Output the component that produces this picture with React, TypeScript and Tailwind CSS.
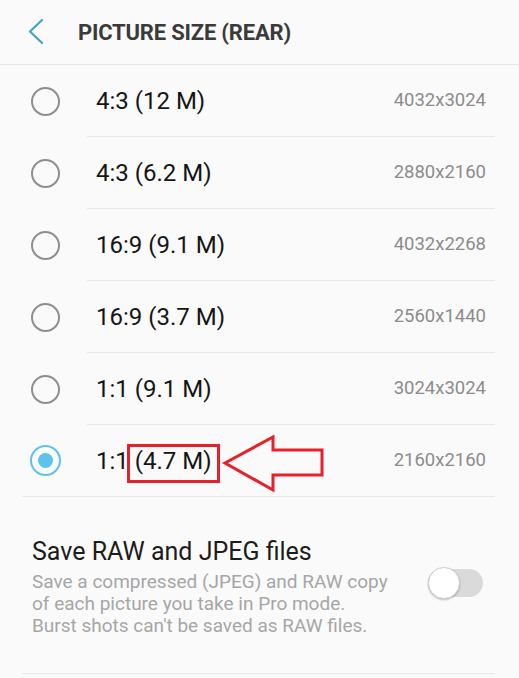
import React from 'react';

interface SizeOption {
  label: string;
  resolution: string;
  selected?: boolean;
}

const options: SizeOption[] = [
  { label: '4:3 (12 M)', resolution: '4032x3024' },
  { label: '4:3 (6.2 M)', resolution: '2880x2160' },
  { label: '16:9 (9.1 M)', resolution: '4032x2268' },
  { label: '16:9 (3.7 M)', resolution: '2560x1440' },
  { label: '1:1 (9.1 M)', resolution: '3024x3024' },
  { label: '1:1 (4.7 M)', resolution: '2160x2160', selected: true },
];

function Radio({ selected }: { selected?: boolean }) {
  if (selected) {
    return (
      <div className="w-[31px] h-[31px] rounded-full border-[2.5px] border-[#5bc4e8] flex items-center justify-center">
        <div className="w-[15px] h-[15px] rounded-full bg-[#5bc4e8]" />
      </div>
    );
  }
  return <div className="w-[29px] h-[29px] rounded-full border-2 border-[#8e8e8e]" />;
}

function OptionRow({ option, last }: { option: SizeOption; last: boolean }) {
  return (
    <div
      className={`flex h-[72px] mr-[24px] ${last ? 'ml-[22px] border-b border-[#e8e8e8]' : ''}`}
    >
      <div
        className={`flex items-center justify-center ${last ? 'w-[47px]' : 'w-[87px] pl-[3px]'}`}
      >
        <Radio selected={option.selected} />
      </div>
      <div
        className={`flex-1 flex items-center justify-between pr-[9px] ${last ? 'pl-[27px]' : 'pl-[9px] border-b border-[#e8e8e8]'}`}
      >
        <span className="text-[24px] text-[#151515]">{option.label}</span>
        <span className="text-[18.5px] text-[#8c8c8c]">{option.resolution}</span>
      </div>
    </div>
  );
}

export default function App() {
  return (
    <div
      className="relative w-[519px] h-[678px] overflow-hidden bg-[#fafafa]"
      style={{ fontFamily: 'Roboto, "Noto Sans", sans-serif' }}
    >
      {/* Header */}
      <div className="h-[65px] flex items-center border-b border-[#e6e6e6]">
        <div className="w-[78px] flex items-center pl-[27px]">
          <svg width="18" height="28" viewBox="0 0 18 28" fill="none">
            <polyline
              points="15,2 3,13.5 15,25"
              stroke="#44a2c6"
              strokeWidth="2.2"
              strokeLinecap="round"
              strokeLinejoin="round"
            />
          </svg>
        </div>
        <h1 className="text-[22px] font-bold text-[#3a3a3a] tracking-[-0.2px]">
          PICTURE SIZE (REAR)
        </h1>
      </div>

      {/* Size options */}
      <div>
        {options.map((option, i) => (
          <OptionRow key={option.label} option={option} last={i === options.length - 1} />
        ))}
      </div>

      {/* RAW toggle */}
      <div className="ml-[22px] mr-[24px] border-b border-[#e8e8e8] pt-[40px] pb-[36px] pl-[10px] flex items-center justify-between">
        <div>
          <div className="text-[25px] leading-[30px] text-[#1c1c1c]">Save RAW and JPEG files</div>
          <div className="text-[19px] leading-[22px] text-[#a6a6a6] mt-[4px]">
            Save a compressed (JPEG) and RAW copy
            <br />
            of each picture you take in Pro mode.
            <br />
            Burst shots can't be saved as RAW files.
          </div>
        </div>
        <div className="relative w-[55px] h-[28px] mr-[12px] mb-[8px] rounded-full bg-[#dadada]">
          <div className="absolute left-0 top-[-2px] w-[32px] h-[32px] rounded-full bg-white border border-[#d0d0d0] shadow-[0_1px_2px_rgba(0,0,0,0.25)]" />
        </div>
      </div>

      {/* Annotation overlay */}
      <div className="absolute left-[127px] top-[444px] w-[93px] h-[39px] border-[3px] border-[#e8202a]" />
      <svg
        className="absolute left-[220px] top-[432px]"
        width="108"
        height="64"
        viewBox="0 0 108 64"
        fill="none"
      >
        <polygon
          points="5,31 53,5 53,18 102,18 102,43 53,43 53,58"
          stroke="#e8202a"
          strokeWidth="3"
          fill="#fafafa"
        />
      </svg>
    </div>
  );
}
